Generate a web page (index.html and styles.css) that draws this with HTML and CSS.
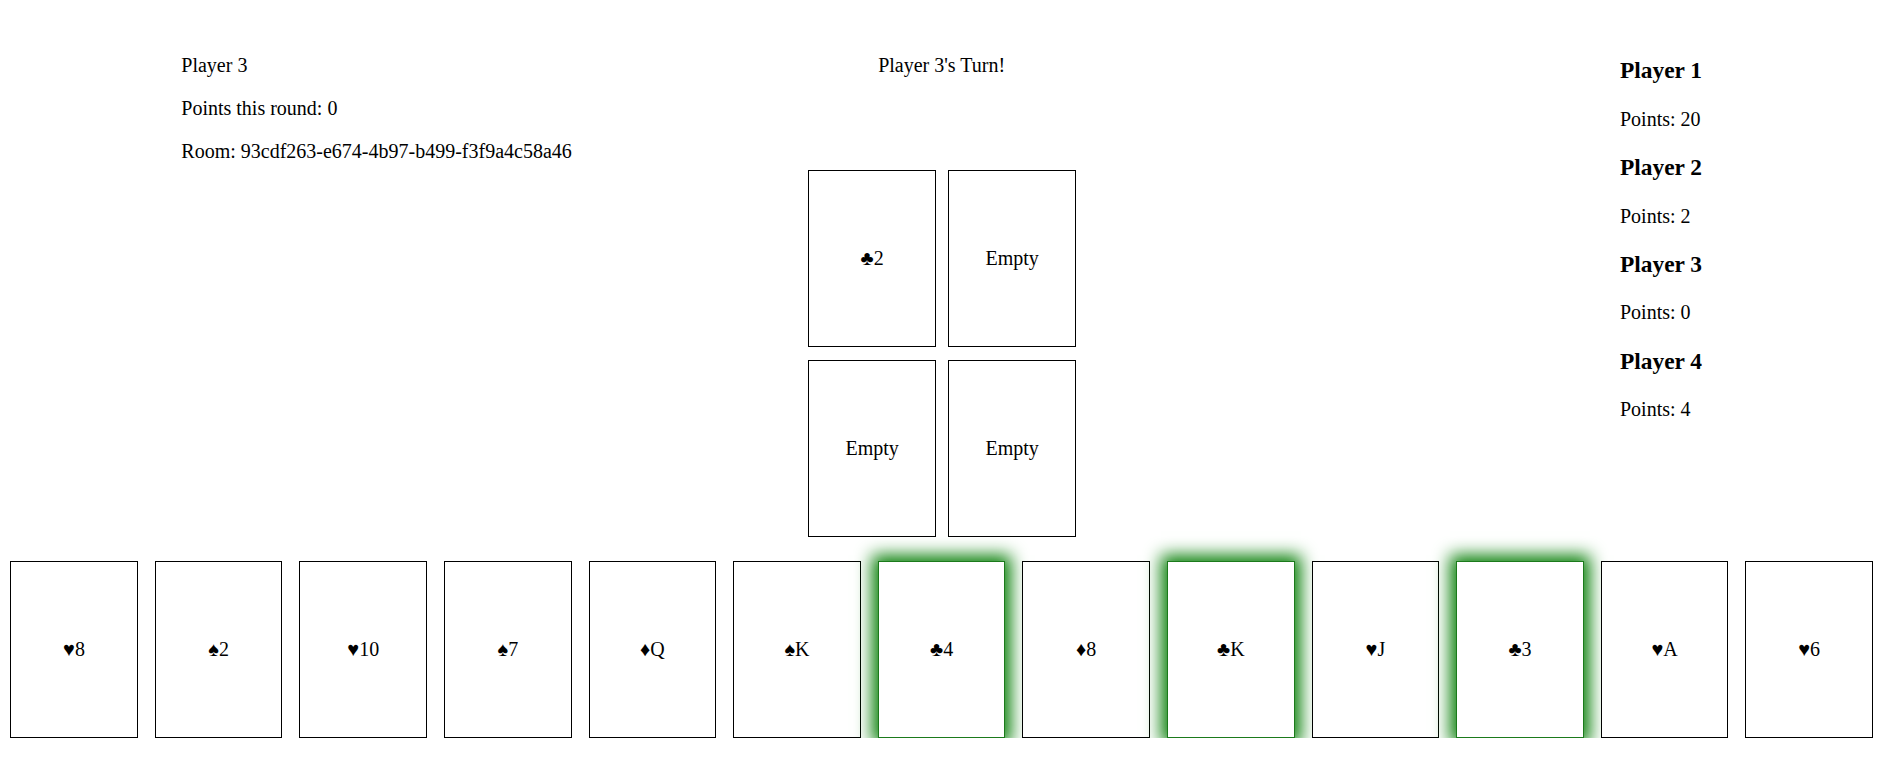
FILE: index.html
```html
<!DOCTYPE html>
<html>
<head>
<meta charset="utf-8">
<title>Card Game</title>
<link rel="stylesheet" href="styles.css">
</head>
<body>
<div class="game">
  <div class="top">
    <div class="info">
      <p>Player 3</p>
      <p>Points this round: 0</p>
      <p>Room: 93cdf263-e674-4b97-b499-f3f9a4c58a46</p>
    </div>
    <div class="center">
      <p class="turn">Player 3's Turn!</p>
      <div class="board">
        <div class="card">♣2</div>
        <div class="card">Empty</div>
        <div class="card">Empty</div>
        <div class="card">Empty</div>
      </div>
    </div>
    <div class="scores">
      <h3>Player 1</h3>
      <p>Points: 20</p>
      <h3>Player 2</h3>
      <p>Points: 2</p>
      <h3>Player 3</h3>
      <p>Points: 0</p>
      <h3>Player 4</h3>
      <p>Points: 4</p>
    </div>
  </div>
  <div class="hand">
    <div class="card">♥8</div>
    <div class="card">♠2</div>
    <div class="card">♥10</div>
    <div class="card">♠7</div>
    <div class="card">♦Q</div>
    <div class="card">♠K</div>
    <div class="card playable">♣4</div>
    <div class="card">♦8</div>
    <div class="card playable">♣K</div>
    <div class="card">♥J</div>
    <div class="card playable">♣3</div>
    <div class="card">♥A</div>
    <div class="card">♥6</div>
  </div>
</div>
</body>
</html>
```
FILE: styles.css
```css
html, body {
  margin: 0;
  padding: 0;
  background: #fff;
}

body {
  font-family: "Liberation Serif", "Times New Roman", "DejaVu Sans", serif;
  font-size: 20px;
  color: #000;
}

.game {
  padding: 0 9px 0 10.3px;
}

.top {
  display: grid;
  grid-template-columns: 1fr auto 1fr;
  padding-top: 34px;
}

p {
  margin: 20px 0;
}

.info {
  padding-left: 171px;
}

.center {
  text-align: center;
}

.turn {
  margin-bottom: 0;
}

.board {
  margin-top: 93px;
  display: grid;
  grid-template-columns: 127.5px 127.5px;
  gap: 12.5px;
  padding-left: 1px;
}

.scores {
  justify-self: end;
  width: 253px;
}

.scores h3 {
  font-size: 23.4px;
  font-weight: bold;
  margin: 23.4px 0;
}

.card {
  box-sizing: border-box;
  width: 127.5px;
  height: 177px;
  border: 1px solid #000;
  background: #fff;
  display: flex;
  align-items: center;
  justify-content: center;
}

.hand {
  margin-top: 24.5px;
  display: flex;
  justify-content: space-between;
}

.playable {
  border-color: #1b7a1b;
  box-shadow: 0 0 16px 6px rgba(10, 128, 10, 1);
}
```
